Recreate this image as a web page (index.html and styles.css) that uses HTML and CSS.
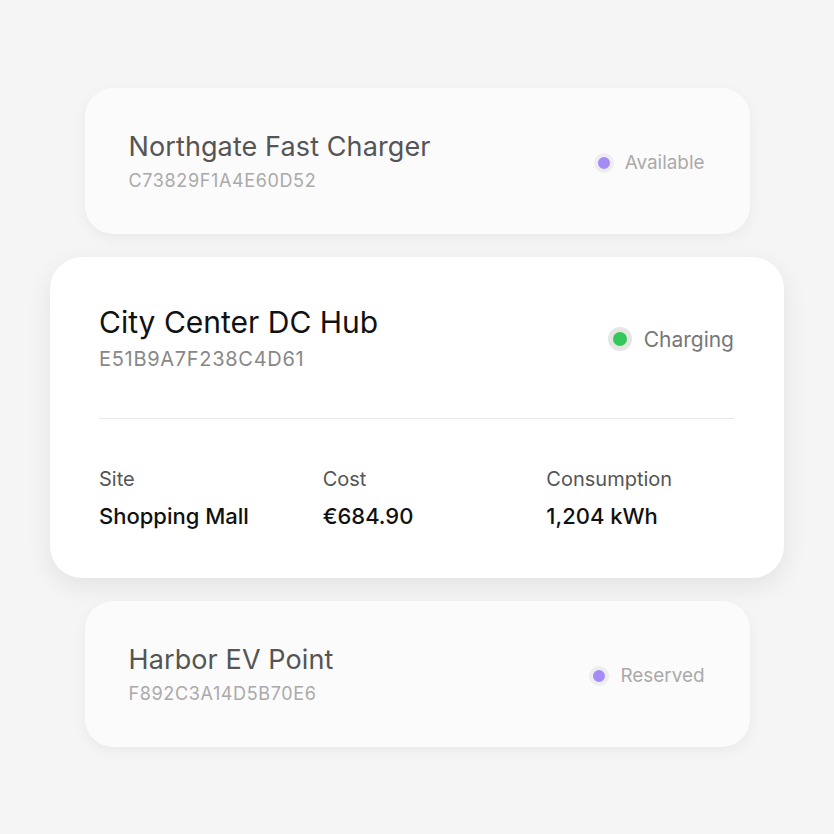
FILE: index.html
```html
<!DOCTYPE html>
<html lang="en">
<head>
    <meta charset="UTF-8">
    <meta name="viewport" content="width=device-width, initial-scale=1.0">
    <title>Charging Stations</title>
    <link rel="stylesheet" href="styles.css">
</head>
<body>
    <div class="station-list">
        <div class="station-card side">
            <div class="station-head">
                <div class="station-info">
                    <div class="station-name">Northgate Fast Charger</div>
                    <div class="station-id">C73829F1A4E60D52</div>
                </div>
                <div class="status">
                    <span class="status-dot purple"></span>
                    <span>Available</span>
                </div>
            </div>
        </div>

        <div class="station-card active">
            <div class="station-head">
                <div class="station-info">
                    <div class="station-name">City Center DC Hub</div>
                    <div class="station-id">E51B9A7F238C4D61</div>
                </div>
                <div class="status">
                    <span class="status-dot green"></span>
                    <span>Charging</span>
                </div>
            </div>
            <div class="divider"></div>
            <div class="details">
                <div class="detail">
                    <div class="detail-label">Site</div>
                    <div class="detail-value">Shopping Mall</div>
                </div>
                <div class="detail">
                    <div class="detail-label">Cost</div>
                    <div class="detail-value">€684.90</div>
                </div>
                <div class="detail">
                    <div class="detail-label">Consumption</div>
                    <div class="detail-value">1,204 kWh</div>
                </div>
            </div>
        </div>

        <div class="station-card side">
            <div class="station-head">
                <div class="station-info">
                    <div class="station-name">Harbor EV Point</div>
                    <div class="station-id">F892C3A14D5B70E6</div>
                </div>
                <div class="status">
                    <span class="status-dot purple"></span>
                    <span>Reserved</span>
                </div>
            </div>
        </div>
    </div>
</body>
</html>
```

FILE: styles.css
```css
body {
    margin: 0;
    padding: 0;
    min-height: 100vh;
    display: flex;
    justify-content: center;
    align-items: center;
    background: #f5f5f5;
    font-family: Inter, "Noto Sans", sans-serif;
    color: #111;
}
.station-list {
    display: flex;
    flex-direction: column;
    align-items: center;
    gap: 23px;
}
.station-card {
    box-sizing: border-box;
    background: #fff;
}
.station-card.side {
    width: 665px;
    height: 146px;
    padding: 2px 45px 0 44px;
    display: flex;
    flex-direction: column;
    justify-content: center;
    background: #fbfbfb;
    border-radius: 28px;
    box-shadow: 0 4px 14px rgba(0, 0, 0, 0.05);
}
.station-card.active {
    width: 734px;
    padding: 47px 50px 48px 49px;
    border-radius: 32px;
    box-shadow: 0 8px 26px rgba(0, 0, 0, 0.08);
}
.station-head {
    display: flex;
    justify-content: space-between;
    align-items: center;
}
.station-name {
    font-size: 30px;
    line-height: 36px;
    color: #111;
}
.station-id {
    margin-top: 7px;
    font-size: 20px;
    line-height: 24px;
    color: #888;
    letter-spacing: 0.035em;
}
.status {
    display: flex;
    align-items: center;
    gap: 12px;
    padding-top: 4px;
    font-size: 21px;
    color: #777;
}
.status-dot {
    width: 14px;
    height: 14px;
    border-radius: 50%;
    border: 5px solid #e3e6e3;
}
.status-dot.green {
    background: #34c759;
}
.status-dot.purple {
    background: #a48bf6;
    border-color: #eeeef0;
}
.side .station-name {
    font-size: 27px;
    line-height: 32px;
    color: #555;
    letter-spacing: 0.004em;
}
.side .station-id {
    margin-top: 7px;
    font-size: 18px;
    line-height: 22px;
    color: #aaa;
}
.side .status {
    padding-top: 2px;
    font-size: 18.9px;
    color: #aaa;
    gap: 11px;
}
.side .status-dot {
    width: 12px;
    height: 12px;
    border-width: 4.5px;
}
.divider {
    height: 1px;
    background: #e8e8e8;
    margin: 47px 0 48px;
}
.details {
    display: grid;
    grid-template-columns: repeat(3, 1fr);
    gap: 36px;
}
.detail-label {
    font-size: 20px;
    line-height: 24px;
    color: #555;
}
.detail-value {
    margin-top: 11px;
    font-size: 22px;
    line-height: 28px;
    font-weight: 500;
    color: #111;
}
```
